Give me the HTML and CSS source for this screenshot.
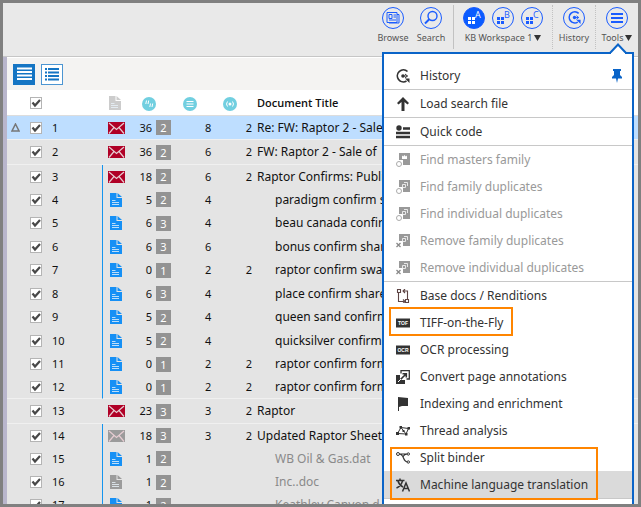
FILE: index.html
```
<!DOCTYPE html>
<html lang="en">
<head>
<meta charset="utf-8">
<title>KB Workspace 1</title>
<link rel="stylesheet" href="styles.css">
</head>
<body>
<svg class="defs" aria-hidden="true">
  <symbol id="mail" viewBox="0 0 17 12"><rect width="17" height="12" fill="currentColor"/><path d="M1 1l7.500 6.500L16 1M1 11.500l5-6M16 11.500l-5-6" fill="none" stroke="#e6ccd2" stroke-width="1.200"/></symbol>
  <symbol id="doc" viewBox="0 0 12 14"><path d="M0 0h6.500v5H12v9H0z" fill="currentColor"/><path d="M7.500 0L12 4H7.500z" fill="currentColor"/><path d="M2 7.500h3.500M2 9.500h7M2 11.500h7" stroke="#e8f2fa" stroke-width=".8" fill="none"/></symbol>
  <symbol id="history" viewBox="0 0 14 14"><path d="M11.500 2.500A6 6 0 1 0 10.500 12" fill="none" stroke="currentColor" stroke-width="1.700"/><path d="M9 9.500h4.500V14z" fill="currentColor"/><path d="M7 7h4.500M9 5l2.500 2L9 9" fill="none" stroke="currentColor" stroke-width="1"/><circle cx="7" cy="7" r="1.800" fill="currentColor"/></symbol>
  <symbol id="page" viewBox="0 0 14 14"><path d="M3 0h11v12H7V7H3z" fill="currentColor"/></symbol>
  <symbol id="ring" viewBox="0 0 14 14"><circle cx="3" cy="11" r="2.500" fill="#fff" stroke="#aaa"/></symbol>
  <symbol id="cross" viewBox="0 0 14 14"><path d="M.5 9l4 4M4.500 9l-4 4" stroke="#888" stroke-width="1.300"/></symbol>
  <symbol id="crown" viewBox="0 0 14 14"><path d="M6 2.500l1.200 1 1.300-1.500 1.300 1.500 1.200-1V6H6z" fill="#fff"/></symbol>
  <symbol id="copies" viewBox="0 0 14 14"><path d="M8 2.500h3.500v3.500M6.500 4.500h3v3h-3z" fill="none" stroke="#f0f0f0" stroke-width=".9"/></symbol>
</svg>
<header class="topbar">
  <nav class="tools">
    <button class="tool plain"><svg class="disc" viewBox="0 0 22 22"><circle class="rim" cx="11" cy="11" r="10.500"/><path d="M5 5.500h10v10H5zM15 7.500h2v8.500H7" fill="none" stroke="#1a5cff"/><path d="M7 7.500h3v4H7zM11.500 8H14M11.500 10H14M7 13h7" fill="none" stroke="#1a5cff"/></svg><span>Browse</span></button>
    <button class="tool plain search"><svg class="disc" viewBox="0 0 22 22"><circle class="rim" cx="11" cy="11" r="10.500"/><circle cx="12.500" cy="9" r="4.500" fill="none" stroke="#1a5cff" stroke-width="1.400"/><path d="M9.500 12l-4.500 4.500" stroke="#1a5cff" stroke-width="2"/></svg><span>Search</span></button>
    <div class="workspace">
      <div class="spaces">
        <button class="space on" aria-label="Workspace A"><svg class="disc" viewBox="0 0 22 22"><circle class="rim" cx="11" cy="11" r="10.500"/><path d="M5 10h3v3H5zM9 10h3v3H9zM5 14h3v3H5zM9 14h3v3H9z" fill="currentColor"/><text x="12" y="11">A</text></svg></button>
        <button class="space" aria-label="Workspace B"><svg class="disc" viewBox="0 0 22 22"><circle class="rim" cx="11" cy="11" r="10.500"/><path d="M5 10h3v3H5zM9 10h3v3H9zM5 14h3v3H5zM9 14h3v3H9z" fill="currentColor"/><text x="12" y="11">B</text></svg></button>
        <button class="space" aria-label="Workspace C"><svg class="disc" viewBox="0 0 22 22"><circle class="rim" cx="11" cy="11" r="10.500"/><path d="M5 10h3v3H5zM9 10h3v3H9zM5 14h3v3H5zM9 14h3v3H9z" fill="currentColor"/><text x="12" y="11">C</text></svg></button>
      </div>
      <button class="caption">KB Workspace 1<svg class="caret" viewBox="0 0 7 6"><path d="M0 0h7L3.500 6z"/></svg></button>
    </div>
    <button class="tool dotted"><svg class="disc" viewBox="0 0 22 22"><circle class="rim" cx="11" cy="11" r="10.500"/><use href="#history" x="5" y="4" width="13" height="13"/></svg><span>History</span></button>
    <button class="tool dotted"><svg class="disc" viewBox="0 0 22 22"><circle class="rim" cx="11" cy="11" r="10.500"/><path d="M5 7h12M5 11h12M5 15h12" stroke="#1a5cff" stroke-width="2"/></svg><span>Tools<svg class="caret" viewBox="0 0 7 6"><path d="M0 0h7L3.500 6z"/></svg></span></button>
  </nav>
</header>
<main class="pane">
  <div class="views">
    <button class="view active" aria-label="Compact view"><svg viewBox="0 0 22 21"><path d="M4 4.500h15M4 8h15M4 11.500h15M4 15h15" stroke="#fff" stroke-width="2"/></svg></button>
    <button class="view" aria-label="List view"><svg viewBox="0 0 22 21"><path d="M4 5h2M7 5h11M4 8.500h2M7 8.500h11M4 12h2M7 12h11M4 15.500h2M7 15.500h11" stroke="#1575c4" stroke-width="2"/></svg></button>
  </div>
  <table class="docs">
    <colgroup><col class="c-flag"><col class="c-check"><col class="c-num"><col class="c-icon"><col class="c-count"><col class="c-badge"><col class="c-mid"><col class="c-last"><col></colgroup>
    <thead><tr>
      <th></th><th><input type="checkbox" checked aria-label="Select all"></th><th></th>
      <th class="icon"><svg class="doc pale"><use href="#doc"/></svg></th>
      <th colspan="2"><svg class="dot" viewBox="0 0 14 14"><circle cx="7" cy="7" r="7" fill="#71cfe0"/><path d="M4.500 3.500L3.800 7M6.700 3.500L6 7M8.500 6.500L7.800 10M10.700 6.500L10 10" stroke="#fff"/></svg></th>
      <th><svg class="dot" viewBox="0 0 14 14"><circle cx="7" cy="7" r="7" fill="#71cfe0"/><path d="M3.500 4.500h7M3.500 7h7M3.500 9.500h7" stroke="#fff"/></svg></th>
      <th><svg class="dot last" viewBox="0 0 14 14"><circle cx="7" cy="7" r="7" fill="#71cfe0"/><circle cx="7" cy="7" r="1.500" fill="#fff"/><path d="M4.500 4.500q-2 2.500 0 5M9.500 4.500q2 2.500 0 5" fill="none" stroke="#fff"/></svg></th>
      <th class="title">Document Title</th>
    </tr></thead>
  </table>
</main>
<aside class="menu">
  <svg class="pointer" viewBox="0 0 18 11"><path d="M1 10l8-8.500L17 10" fill="#fff" stroke="#0a64c8" stroke-width="2"/><path d="M2 10h14v1H2z" fill="#fff"/></svg>
  <ul>
    <li class="end"><button><svg><use href="#history"/></svg>History<svg class="pin" viewBox="0 0 12 14"><path d="M2 0h8v2H9v4l2 2v1.500H7L6 14 5 9.500H1V8l2-2V2H2z" fill="#0a64c8"/></svg></button></li>
    <li class="end"><button><svg viewBox="0 0 14 14"><path d="M7 0l6 6-1.500 1.500-3-2.500v9h-3V5l-3 2.500L1 6z" fill="currentColor"/></svg>Load search file</button></li>
    <li class="end"><button><svg viewBox="0 0 14 14"><circle cx="3" cy="3" r="2.700" fill="currentColor"/><path d="M7 3.500h7M0 8h14M0 12h14" stroke="currentColor" stroke-width="2.400"/></svg>Quick code</button></li>
    <li><button disabled><svg><use href="#page"/><use href="#crown"/><use href="#ring"/></svg>Find masters family</button></li>
    <li><button disabled><svg><use href="#page"/><use href="#copies"/><use href="#ring"/></svg>Find family duplicates</button></li>
    <li><button disabled><svg><use href="#page"/><use href="#copies"/><use href="#ring"/></svg>Find individual duplicates</button></li>
    <li><button disabled><svg><use href="#page"/><use href="#copies"/><use href="#cross"/></svg>Remove family duplicates</button></li>
    <li class="end"><button disabled><svg><use href="#page"/><use href="#copies"/><use href="#cross"/></svg>Remove individual duplicates</button></li>
    <li><button><svg viewBox="0 0 14 14"><path d="M1.500.5h3v3h-3zM2.500 3.500v9H8M7 10.500l2 2-2 2M9.500 10.500h3v3h-3zM11.500 10V2H7M9 0L7 2l2 2" fill="none" stroke="#5e4545" stroke-width="1.100"/></svg>Base docs / Renditions</button></li>
    <li class="marked"><button><svg viewBox="0 0 14 14"><path d="M0 2.500h14v9H0z" fill="currentColor"/><text x="7" y="9" class="tag">TOF</text></svg>TIFF-on-the-Fly</button></li>
    <li><button><svg viewBox="0 0 14 14"><path d="M0 2.500h14v9H0z" fill="currentColor"/><text x="7" y="9" class="tag">OCR</text></svg>OCR processing</button></li>
    <li><button><svg viewBox="0 0 14 14"><path d="M5 3.500V.7h8.300V9H10.500" fill="none" stroke="currentColor" stroke-width="1.300"/><path d="M0 5h4v5h5v4H0z" fill="currentColor"/><path d="M4 10l6-6M6.500 3.700h3.800v3.800" fill="none" stroke="currentColor" stroke-width="1.600"/><path d="M2 12l3-3" fill="none" stroke="#fff"/></svg>Convert page annotations</button></li>
    <li><button><svg viewBox="0 0 14 14"><path d="M2 0l10 1v8H6l-3 1v4H2z" fill="currentColor"/></svg>Indexing and enrichment</button></li>
    <li><button><svg viewBox="0 0 14 14"><path d="M1.500 9.500L5 3.500l5 6.500 2.500-5.500M1.500 9.500l8.500 .5M5 3.500l7.500 1" fill="none" stroke="currentColor"/><path d="M0 8h3v3H0zM3.500 2H6v2.500H3.500zM9 9h2.500v2.500H9zM11.500 3H14v2.500h-2.500zM6.500 6h2v2h-2z" fill="currentColor"/></svg>Thread analysis</button></li>
    <li><button><svg viewBox="0 0 14 14"><path d="M3 3q3 0 4.500 4T12 11M3 3h9M7 6q1-3 5-3" fill="none" stroke="currentColor" stroke-width="1.200"/><g fill="#fff" stroke="currentColor"><circle cx="2" cy="3" r="1.500"/><circle cx="12.300" cy="3" r="1.200"/><circle cx="12.300" cy="11" r="1.200"/></g></svg>Split binder</button></li>
    <li class="end current"><button><svg viewBox="0 0 14 14"><path d="M0 2.500h8.500M4 .5v2M2 3q1 4 5 6M6.500 3Q5 8 .5 10M6.500 13.500L10 5l3.500 8.500M8 10.500h4.500" fill="none" stroke="currentColor" stroke-width="1.500"/></svg>Machine language translation</button></li>
  </ul>
  <div class="frame"></div>
</aside>
<script src="rows.js"></script>
</body>
</html>
```
FILE: styles.css
```
*, *::before, *::after { box-sizing: border-box; }
body {
  margin: 0;
  height: 100vh;
  overflow: hidden;
  position: relative;
  display: flex;
  flex-direction: column;
  border: 3px solid #808080;
  background: #e4e4e4;
  font-family: "Noto Sans", "Open Sans", sans-serif;
  font-size: 12px;
  color: #111;
}
.defs { position: absolute; width: 0; height: 0; }
button { font: inherit; color: inherit; background: none; border: 0; padding: 0; margin: 0; }
svg { display: block; flex: none; }

.topbar {
  flex: none;
  height: 54px;
  padding-top: 2px;
  background: #e9e9e9;
  border-bottom: 1px solid #c6c6c6;
}
.tools { display: flex; justify-content: flex-end; height: 44px; font-size: 9px; line-height: 14px; color: #555; }
.tool { width: 43px; padding-top: 2px; display: flex; flex-direction: column; align-items: center; }
.plain { width: 38px; }
.search { margin-right: 3px; }
.tool span { display: flex; align-items: center; }
.disc { width: 22px; height: 22px; margin-bottom: 2px; color: #1a5cff; }
.rim { fill: none; stroke: #1a5cff; }
.disc text { font: 9px "Open Sans", sans-serif; fill: currentColor; }
.on .disc { color: #fff; }
.on .rim { fill: #0a5cff; }
.workspace { width: 99px; padding-top: 2px; border-left: 1px solid #c2c2c2; display: flex; flex-direction: column; align-items: center; }
.spaces { display: flex; gap: 7px; }
.caption { display: flex; align-items: center; }
.caret { width: 7px; height: 6px; margin-left: 2px; fill: #333; }
.dotted { border-left: 1px dotted #c2c2c2; }

.pane { flex: 1; min-height: 0; overflow: hidden; border-left: 4px solid #b9b6cc; }
.views { height: 33px; padding: 6px; display: flex; gap: 6px; background: #f4f3f2; border-top: 1px solid #fff; }
.view { width: 22px; height: 21px; background: #fff; border: 1px solid #4c95d2; }
.view svg { width: 22px; height: 21px; margin: -1px; }
.active { background: #1575c4; border-color: #1575c4; }

.docs { width: 100%; table-layout: fixed; border-collapse: separate; border-spacing: 0; }
.docs td, .docs th { padding: 0; height: 23px; line-height: 16px; text-align: left; vertical-align: middle; white-space: nowrap; overflow: hidden; }
.docs td { font-size: 11px; }
.docs th { height: 26px; background: #fff; border-bottom: 1px solid #ddd; font: 600 11px/16px "Open Sans", sans-serif; }
.c-flag { width: 23px; }
.c-check { width: 22px; }
.c-num { width: 50px; }
.c-icon { width: 31px; }
.c-count { width: 19px; }
.c-badge { width: 31px; }
.c-mid { width: 36px; }
.c-last { width: 33px; }
.docs tbody tr:nth-child(odd):not(:first-child) td { height: 24px; }
.docs tbody tr:last-child td { border-bottom: 1px solid #f0f0f0; }
.docs tbody.single td { height: 25px; }
.docs tbody.selected td { height: 24px; background: #bedeff; }
.flag { width: 9px; height: 9px; margin-left: 4px; }
.docs input { appearance: none; display: block; width: 12px; height: 12px; margin: 0; border: 1px solid #b4b4b4; background: #fff url("data:image/svg+xml,%3Csvg xmlns='http://www.w3.org/2000/svg' viewBox='0 0 10 10'%3E%3Cpath d='M1.500 4.500L4 7.500 9 2' fill='none' stroke='%23484848' stroke-width='2.200'/%3E%3C/svg%3E") center / 10px no-repeat; }
.docs td.icon, .docs th.icon { padding-left: 6px; }
.docs .family td.icon { border-left: 1px solid #1494ee; padding-left: 5px; }
.mail { width: 17px; height: 12px; color: #b00026; }
.doc { width: 12px; height: 14px; margin-left: 2px; color: #1690f5; }
.doc.pale { color: #ccc; margin-left: 1px; }
.mail.grey, .doc.grey { color: #9b9b9b; }
.dot { width: 14px; height: 14px; margin: 3px 0 0 9px; }
th:nth-child(5) .dot { margin-left: 9px; }
th:nth-child(6) .dot { margin-left: 0; }
.dot.last { margin-left: 4px; }
.docs td.right { text-align: right; }
.docs td.mid { padding-left: 22px; }
.badge { display: block; width: 15px; height: 15px; line-height: 15px; margin-left: 4px; background: #939393; color: #fff; text-align: center; }
.docs .title { padding-left: 5px; }
.docs td.title { font-size: 12px; }
.docs .child .title { padding-left: 23px; }
.dim { color: #8a8a8a; }

.menu { position: absolute; right: 4px; top: 49px; width: 252px; height: 470px; background: #fff; border: 2px solid #0a64c8; color: #333; font-size: 12px; }
.pointer { position: absolute; right: 5px; top: -11px; width: 18px; height: 11px; }
.menu ul { list-style: none; margin: 0; padding: 8px 0 0; }
.menu button { width: 100%; height: 27px; padding: 0 9px 0 12px; display: flex; align-items: center; gap: 10px; text-align: left; }
.menu button svg { width: 14px; height: 14px; }
.menu button svg.pin { width: 12px; margin-left: auto; }
.menu button:disabled { color: #999; }
.end { border-bottom: 1px solid #c8c8c8; }
.current { background: #dadada; }
.marked { position: relative; }
.marked::after, .frame { content: ""; position: absolute; border: 2px solid #ff8500; pointer-events: none; }
.marked::after { left: 5px; top: -2px; width: 124px; height: 29px; }
.frame { left: 6px; top: 393px; width: 208px; height: 53px; }
.tag { font: bold 5px "Liberation Sans", sans-serif; fill: #fff; text-anchor: middle; }
```
FILE: rows.js
```
// Each inner list is one document family: the parent first, then its attachments.
// Fields: icon, count, group, list count, audio count, title
const families = [
  [["mail", 36, 2, 8, 2, "Re: FW: Raptor 2 - Sale"]],
  [["mail", 36, 2, 6, 2, "FW: Raptor 2 - Sale of"]],
  [
    ["mail", 18, 2, 6, 2, "Raptor Confirms: Publi"],
    ["doc", 5, 2, 4, "", "paradigm confirm s"],
    ["doc", 6, 3, 4, "", "beau canada confir"],
    ["doc", 6, 3, 6, "", "bonus confirm shar"],
    ["doc", 0, 1, 2, 2, "raptor confirm swap"],
    ["doc", 6, 3, 4, "", "place confirm share"],
    ["doc", 5, 2, 4, "", "queen sand confirm"],
    ["doc", 5, 2, 4, "", "quicksilver confirm"],
    ["doc", 0, 1, 2, 2, "raptor confirm form"],
    ["doc", 0, 1, 2, 2, "raptor confirm form"]
  ],
  [["mail", 23, 3, 3, 2, "Raptor"]],
  [
    ["mail grey", 18, 3, 3, 2, "Updated Raptor Sheet"],
    ["doc", 1, 2, "", "", "WB Oil & Gas.dat", true],
    ["doc grey", 1, 2, "", "", "Inc..doc", true],
    ["doc", 1, 2, "", "", "Keathley Canyon d", true]
  ]
];
const table = document.querySelector(".docs");
const flag = '<svg class="flag" viewBox="0 0 9 9"><path d="M4.500 1L8 8H1z" fill="none" stroke="#777" stroke-width="1.500"/></svg>';
let n = 0;
families.forEach((family, f) => {
  const body = document.createElement("tbody");
  body.className = (family.length > 1 ? "family" : "single") + (f === 0 ? " selected" : "");
  family.forEach(([icon, count, group, mid, last, title, dim], i) => {
    n += 1;
    const row = body.insertRow();
    if (i) row.className = "child";
    row.innerHTML = `<td>${n === 1 ? flag : ""}</td>
      <td><input type="checkbox" checked aria-label="Select document ${n}"></td>
      <td>${n}</td>
      <td class="icon"><svg class="${icon}"><use href="#${icon.split(" ")[0]}"/></svg></td>
      <td class="right">${count}</td>
      <td><span class="badge">${group}</span></td>
      <td class="mid">${mid}</td>
      <td class="right">${last}</td>
      <td class="title${dim ? " dim" : ""}">${title.replace("&", "&amp;")}</td>`;
  });
  table.append(body);
});
```
